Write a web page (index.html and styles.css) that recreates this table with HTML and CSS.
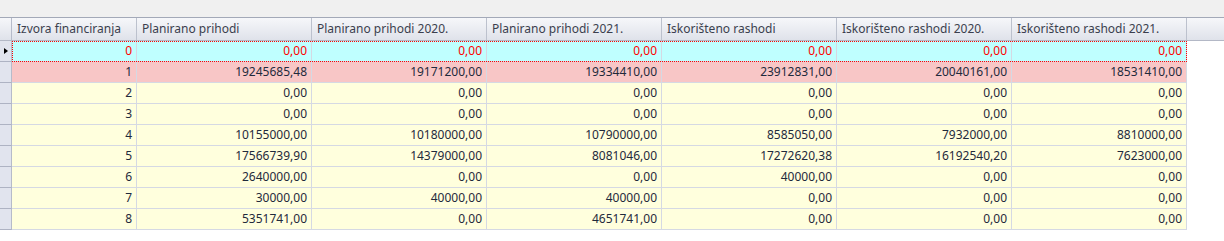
FILE: index.html
```html
<!DOCTYPE html>
<html>
<head>
<meta charset="utf-8">
<link rel="stylesheet" href="styles.css">
</head>
<body>
<div class="topbar"></div>
<div class="grid">
  <div class="hdr">
    <div class="ind"></div>
    <div class="hc c1">Izvora financiranja</div>
    <div class="hc">Planirano prihodi</div>
    <div class="hc">Planirano prihodi 2020.</div>
    <div class="hc">Planirano prihodi 2021.</div>
    <div class="hc">Iskorišteno rashodi</div>
    <div class="hc">Iskorišteno rashodi 2020.</div>
    <div class="hc">Iskorišteno rashodi 2021.</div>
    <div class="hfill"></div>
  </div>

  <div class="row">
    <div class="ind"><span class="arrow"></span></div>
    <div class="cells current">
      <div class="c c1">0</div><div class="c">0,00</div><div class="c">0,00</div><div class="c">0,00</div><div class="c">0,00</div><div class="c">0,00</div><div class="c">0,00</div>
    </div>
  </div>
  <div class="row">
    <div class="ind"></div>
    <div class="cells pink">
      <div class="c c1">1</div><div class="c">19245685,48</div><div class="c">19171200,00</div><div class="c">19334410,00</div><div class="c">23912831,00</div><div class="c">20040161,00</div><div class="c">18531410,00</div>
    </div>
  </div>
  <div class="row">
    <div class="ind"></div>
    <div class="cells">
      <div class="c c1">2</div><div class="c">0,00</div><div class="c">0,00</div><div class="c">0,00</div><div class="c">0,00</div><div class="c">0,00</div><div class="c">0,00</div>
    </div>
  </div>
  <div class="row">
    <div class="ind"></div>
    <div class="cells">
      <div class="c c1">3</div><div class="c">0,00</div><div class="c">0,00</div><div class="c">0,00</div><div class="c">0,00</div><div class="c">0,00</div><div class="c">0,00</div>
    </div>
  </div>
  <div class="row">
    <div class="ind"></div>
    <div class="cells">
      <div class="c c1">4</div><div class="c">10155000,00</div><div class="c">10180000,00</div><div class="c">10790000,00</div><div class="c">8585050,00</div><div class="c">7932000,00</div><div class="c">8810000,00</div>
    </div>
  </div>
  <div class="row">
    <div class="ind"></div>
    <div class="cells">
      <div class="c c1">5</div><div class="c">17566739,90</div><div class="c">14379000,00</div><div class="c">8081046,00</div><div class="c">17272620,38</div><div class="c">16192540,20</div><div class="c">7623000,00</div>
    </div>
  </div>
  <div class="row">
    <div class="ind"></div>
    <div class="cells">
      <div class="c c1">6</div><div class="c">2640000,00</div><div class="c">0,00</div><div class="c">0,00</div><div class="c">40000,00</div><div class="c">0,00</div><div class="c">0,00</div>
    </div>
  </div>
  <div class="row">
    <div class="ind"></div>
    <div class="cells">
      <div class="c c1">7</div><div class="c">30000,00</div><div class="c">40000,00</div><div class="c">40000,00</div><div class="c">0,00</div><div class="c">0,00</div><div class="c">0,00</div>
    </div>
  </div>
  <div class="row">
    <div class="ind"></div>
    <div class="cells">
      <div class="c c1">8</div><div class="c">5351741,00</div><div class="c">0,00</div><div class="c">4651741,00</div><div class="c">0,00</div><div class="c">0,00</div><div class="c">0,00</div>
    </div>
  </div>
</div>
</body>
</html>
```

FILE: styles.css
```css
* { box-sizing: border-box; }
html, body {
  margin: 0;
  padding: 0;
  background: #ffffff;
  font-family: "Noto Sans", "Liberation Sans", Arial, sans-serif;
  font-size: 12px;
}
.topbar {
  height: 17px;
  background: #f0f0f0;
}
.grid {
  width: 1224px;
}
.hdr {
  display: flex;
  height: 24px;
  border-top: 1px solid #a3a9b8;
  border-bottom: 1px solid #b3b8c6;
  background: linear-gradient(#f6f7fa, #dfe2ea);
}
.hdr .ind {
  height: 22px;
}
.ind {
  position: relative;
  flex: 0 0 12px;
  width: 12px;
  background: #e1e4ee;
  border-right: 1px solid #b6bbca;
  border-bottom: 1px solid #aeb3c3;
}
.hdr .ind {
  background: transparent;
  border-bottom: none;
}
.hc {
  flex: 0 0 175px;
  height: 22px;
  line-height: 22px;
  padding-left: 5px;
  color: #3b3f4e;
  border-right: 1px solid #bcc1cd;
  white-space: nowrap;
  overflow: hidden;
}
.hc.c1 { flex-basis: 125px; }
.hfill { flex: 1 1 auto; }
.row {
  display: flex;
  height: 21px;
}
.arrow {
  position: absolute;
  left: 4px;
  top: 7px;
  width: 0;
  height: 0;
  border-top: 3.5px solid transparent;
  border-bottom: 3.5px solid transparent;
  border-left: 4px solid #000;
}
.cells {
  display: flex;
  background: #ffffdd;
  color: #1f2a3c;
}
.cells.pink { background: #f8c6c6; }
.cells.current {
  background: #bfffff;
  color: #ff0000;
  outline: 1px dotted #ff0000;
  outline-offset: -1px;
}
.c {
  flex: 0 0 175px;
  height: 21px;
  line-height: 20px;
  text-align: right;
  padding-right: 4px;
  border-right: 1px solid #d5d9e3;
  border-bottom: 1px solid #d5d9e3;
  white-space: nowrap;
}
.c.c1 { flex-basis: 125px; }
```
